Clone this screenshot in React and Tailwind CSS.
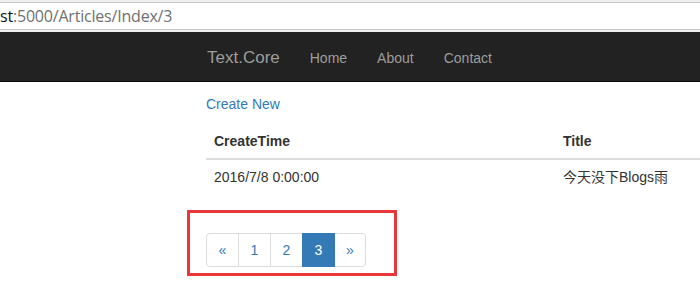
export default function App() {
  const pages = ["«", "1", "2", "3", "»"];
  return (
    <div className="w-[700px] h-[283px] overflow-hidden bg-white font-['Liberation_Sans',Arial,sans-serif] text-[14px] text-[#333]">
      {/* address bar */}
      <div className="h-[32px] bg-[#f0f0f0] pt-[2px] pb-[2px]">
        <div className="h-[28px] bg-white border-y border-[#c8c8c8] flex items-center font-['Open_Sans',sans-serif] text-[16px] leading-none tracking-[-0.2px]">
          <span className="text-[#111]">st</span>
          <span className="text-[#707070]">:5000/Articles/Index/3</span>
        </div>
      </div>

      {/* navbar */}
      <div className="h-[50px] bg-[#222] border-b border-[#080808] flex items-center pt-[3px] pl-[192px]">
        <span className="px-[15px] text-[17px] text-[#9d9d9d]">Text.Core</span>
        <span className="px-[15px] text-[#9d9d9d]">Home</span>
        <span className="px-[15px] text-[#9d9d9d]">About</span>
        <span className="px-[15px] text-[#9d9d9d]">Contact</span>
      </div>

      <div className="relative pl-[206px]">
        <p className="pt-[12px] leading-[20px] text-[#337ab7]">Create New</p>

        <table className="mt-[9px] w-full border-collapse">
          <thead>
            <tr className="border-b-2 border-[#ddd]">
              <th className="text-left font-bold px-[8px] pt-[8px] pb-[7px] leading-[20px] w-[349px]">CreateTime</th>
              <th className="text-left font-bold px-[8px] pt-[8px] pb-[7px] leading-[20px]">Title</th>
            </tr>
          </thead>
          <tbody>
            <tr>
              <td className="px-[8px] pt-[7px] pb-[9px] leading-[20px]">2016/7/8 0:00:00</td>
              <td className="px-[8px] pt-[7px] pb-[9px] leading-[20px] font-['Liberation_Sans','Noto_Sans_CJK_SC',sans-serif]">今天没下Blogs雨</td>
            </tr>
          </tbody>
        </table>

        <div className="mt-[37px] flex">
          {pages.map((p, i) => (
            <span
              key={i}
              className={
                "h-[34px] flex items-center justify-center px-[12px] border leading-[20px] " +
                (i > 0 ? "-ml-px " : "") +
                (i === 0 ? "rounded-l-[4px] w-[33px] " : "") +
                (i === 4 ? "rounded-r-[4px] w-[32px] " : "") +
                (i > 0 && i < 4 ? "w-[33px] " : "") +
                (p === "3"
                  ? "bg-[#337ab7] border-[#337ab7] text-white z-10"
                  : "bg-white border-[#ddd] text-[#337ab7]")
              }
            >
              {p}
            </span>
          ))}
        </div>

        {/* annotation box */}
        <div className="absolute left-[187px] top-[128px] w-[210px] h-[66px] border-[3px] border-[#e8373a]"></div>
      </div>
    </div>
  );
}
